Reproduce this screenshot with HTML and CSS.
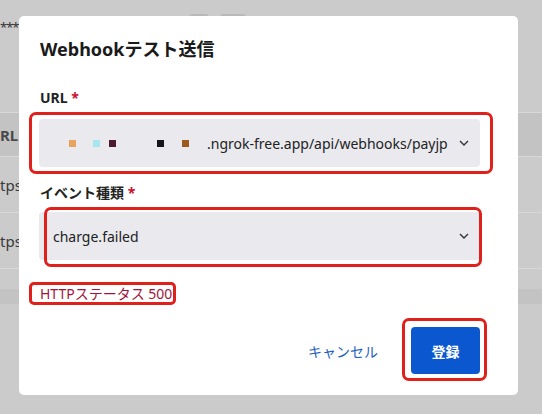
FILE: index.html
```html
<!DOCTYPE html>
<html lang="ja">
<head>
<meta charset="utf-8">
<title>Webhookテスト送信</title>
<link rel="stylesheet" href="styles.css">
</head>
<body>
<div class="page">
  <div class="bg-head">
    <span class="bg-stars">***</span>
    <span class="bg-btn bg-btn-a"></span>
    <span class="bg-btn bg-btn-b"></span>
  </div>
  <div class="bg-table">
    <div class="bg-row bg-th"><span class="cell">RL</span></div>
    <div class="bg-row"><span class="cell">tps</span></div>
    <div class="bg-row"><span class="cell">tps</span></div>
    <div class="bg-row bg-empty"></div>
    <div class="bg-band"></div>
  </div>
</div>

<div class="modal">
  <h2 class="title">Webhookテスト送信</h2>

  <div class="field">
    <div class="label">URL <span class="req">*</span></div>
    <div class="select">
      <span class="value">
        <span class="sq sq1"></span><span class="sq sq2"></span><span class="sq sq3"></span><span class="sq sq4"></span><span class="sq sq5"></span><span class="url-tail">.ngrok-free.app/api/webhooks/payjp</span>
      </span>
      <svg class="chev" width="10" height="6" viewBox="0 0 10 6"><path d="M1 1l4 4 4-4" fill="none" stroke="#333" stroke-width="1.4"/></svg>
    </div>
  </div>

  <div class="field field-event">
    <div class="label">イベント種類 <span class="req">*</span></div>
    <div class="select">
      <span class="value">charge.failed</span>
      <svg class="chev" width="10" height="6" viewBox="0 0 10 6"><path d="M1 1l4 4 4-4" fill="none" stroke="#333" stroke-width="1.4"/></svg>
    </div>
  </div>

  <div class="status">HTTPステータス 500</div>

  <div class="footer">
    <button class="btn-cancel">キャンセル</button>
    <button class="btn-submit">登録</button>
  </div>

  <div class="mark mark-url"></div>
  <div class="mark mark-event"></div>
  <div class="mark mark-status"></div>
  <div class="mark mark-submit"></div>
</div>
</body>
</html>
```

FILE: styles.css
```css
* { box-sizing: border-box; }
html, body { margin: 0; padding: 0; }
body {
  width: 542px;
  height: 414px;
  overflow: hidden;
  background: #cbcbcb;
  font-family: "Noto Sans", "Noto Sans CJK JP", sans-serif;
  color: #222;
  position: relative;
}

/* background page (dimmed) */
.page { width: 542px; }
.bg-head {
  height: 112px;
  display: flex;
  align-items: flex-start;
}
.bg-stars {
  margin-top: 18px;
  font-size: 13px;
  line-height: 18px;
  color: #333;
  letter-spacing: -1px;
}
.bg-btn {
  margin-top: 14px;
  height: 20px;
  background: #b9b9b9;
  border-radius: 4px;
}
.bg-btn-a { width: 20px; margin-left: 170px; }
.bg-btn-b { width: 26px; margin-left: 11px; }

.bg-table { width: 542px; }
.bg-row {
  height: 56px;
  border-top: 1px solid #d8d8d8;
  display: flex;
  align-items: center;
  font-size: 15px;
  color: #3a3a3a;
}
.bg-th {
  height: 44px;
  background: #c3c3c3;
  font-weight: 700;
  color: #4a4a4a;
}
.bg-empty { height: 21px; }
.bg-band { height: 15px; background: #c3c3c3; }
.cell { margin-left: 0; }

/* modal */
.modal {
  position: absolute;
  left: 19px;
  top: 16px;
  width: 499px;
  height: 379px;
  background: #fff;
  border-radius: 5px;
  padding: 19px 38px 0 20px;
  display: flex;
  flex-direction: column;
}
.title {
  margin: 0 0 0 1px;
  font-size: 18px;
  line-height: 28px;
  font-weight: 700;
  color: #1a1a1a;
}
.field { margin-top: 24px; }
.field-event { margin-top: 15px; }
.label {
  margin-left: 1px;
  font-size: 14px;
  line-height: 22px;
  font-weight: 700;
  color: #222;
}
.req { color: #c8102e; }
.select {
  margin-top: 10px;
  height: 48px;
  background: #e9e9ee;
  border-radius: 4px;
  padding: 0 11px 0 14px;
  display: flex;
  align-items: center;
  justify-content: space-between;
  font-size: 14px;
  color: #222;
}
.field-event .select { margin-top: 8px; }
.value { display: flex; align-items: center; }
.sq { display: inline-block; width: 7px; height: 7px; }
.sq1 { background: #e8a45c; margin-left: 16px; }
.sq2 { background: #a6e6f0; margin-left: 17px; }
.sq3 { background: #4b1a2e; margin-left: 9px; }
.sq4 { background: #15151a; margin-left: 41px; }
.sq5 { background: #9c5a1e; margin-left: 18px; }
.url-tail { margin-left: 18px; }
.chev { display: block; }

.status {
  margin-top: 23px;
  margin-left: 1px;
  font-size: 14px;
  line-height: 22px;
  color: #a3143a;
}

.footer {
  margin-top: 22px;
  display: flex;
  justify-content: flex-end;
  align-items: center;
  gap: 33px;
}
.btn-cancel {
  border: 0;
  background: none;
  padding: 0;
  font-family: inherit;
  font-size: 14px;
  color: #1f5fbf;
}
.btn-submit {
  width: 69px;
  height: 47px;
  border: 0;
  border-radius: 4px;
  background: #0b57d0;
  color: #fff;
  font-family: inherit;
  font-size: 14px;
  font-weight: 700;
}

/* red annotation boxes */
.mark {
  position: absolute;
  border: 3px solid #e0201a;
  border-radius: 7px;
  pointer-events: none;
}
.mark-url { left: 10px; top: 96px; width: 464px; height: 62px; }
.mark-event { left: 25px; top: 191px; width: 438px; height: 60px; }
.mark-status { left: 10px; top: 266px; width: 147px; height: 23px; border-radius: 5px; }
.mark-submit { left: 383px; top: 302px; width: 85px; height: 63px; }
```
